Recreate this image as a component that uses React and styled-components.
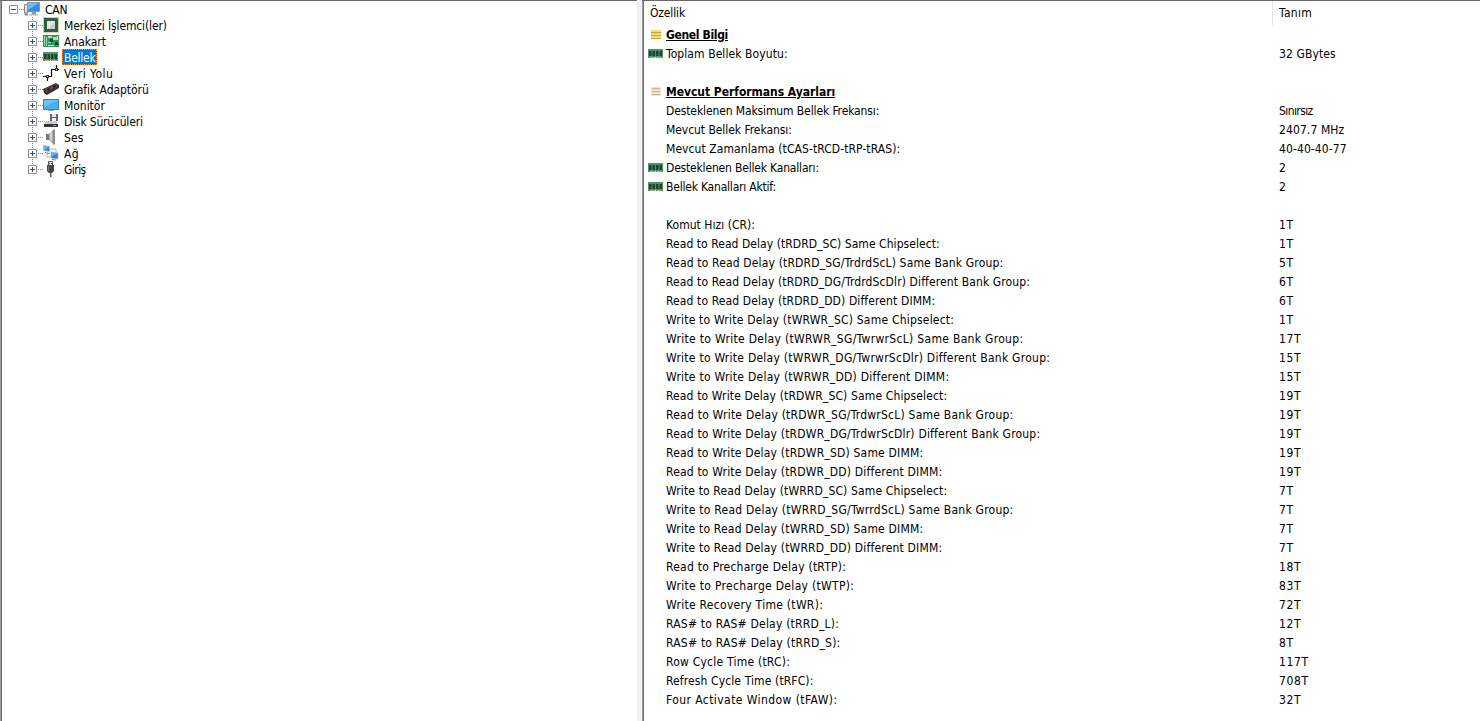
import styled, { createGlobalStyle } from "styled-components";

// stretch: extra pixels spread over the letters of a label
const devices = [
    { name: 'Merkezi İşlemci(ler)', icon: 'cpu', stretch: 2.5 },
    { name: 'Anakart', icon: 'board', stretch: 1.5 },
    { name: 'Bellek', icon: 'ram', stretch: 0, selected: true },
    { name: 'Veri Yolu', icon: 'bus', stretch: 6 },
    { name: 'Grafik Adaptörü', icon: 'gpu', stretch: 3 },
    { name: 'Monitör', icon: 'monitor', stretch: 1.5 },
    { name: 'Disk Sürücüleri', icon: 'disk', stretch: 1 },
    { name: 'Ses', icon: 'sound', stretch: 1 },
    { name: 'Ağ', icon: 'network', stretch: 1 },
    { name: 'Giriş', icon: 'input', stretch: -1.5 },
]

const rows = [
    { name: 'Genel Bilgi', icon: 'gold', heading: true, stretch: -1 },
    { name: 'Toplam Bellek Boyutu:', value: '32 GBytes', icon: 'ram', stretch: 7 },
    {},
    { name: 'Mevcut Performans Ayarları', icon: 'silver', heading: true, stretch: 5.5 },
    { name: 'Desteklenen Maksimum Bellek Frekansı:', value: 'Sınırsız', stretch: 5 },
    { name: 'Mevcut Bellek Frekansı:', value: '2407.7 MHz', stretch: 4.5 },
    { name: 'Mevcut Zamanlama (tCAS-tRCD-tRP-tRAS):', value: '40-40-40-77', stretch: 12.5 },
    { name: 'Desteklenen Bellek Kanalları:', value: '2', icon: 'ram', stretch: 2 },
    { name: 'Bellek Kanalları Aktif:', value: '2', icon: 'ram', stretch: 1 },
    {},
    { name: 'Komut Hızı (CR):', value: '1T', stretch: 4.5 },
    { name: 'Read to Read Delay (tRDRD_SC) Same Chipselect:', value: '1T', stretch: 14 },
    { name: 'Read to Read Delay (tRDRD_SG/TrdrdScL) Same Bank Group:', value: '5T', stretch: 22.5 },
    { name: 'Read to Read Delay (tRDRD_DG/TrdrdScDlr) Different Bank Group:', value: '6T', stretch: 23 },
    { name: 'Read to Read Delay (tRDRD_DD) Different DIMM:', value: '6T', stretch: 16.5 },
    { name: 'Write to Write Delay (tWRWR_SC) Same Chipselect:', value: '1T', stretch: 22 },
    { name: 'Write to Write Delay (tWRWR_SG/TwrwrScL) Same Bank Group:', value: '17T', stretch: 32 },
    { name: 'Write to Write Delay (tWRWR_DG/TwrwrScDlr) Different Bank Group:', value: '15T', stretch: 32.5 },
    { name: 'Write to Write Delay (tWRWR_DD) Different DIMM:', value: '15T', stretch: 24 },
    { name: 'Read to Write Delay (tRDWR_SC) Same Chipselect:', value: '19T', stretch: 18 },
    { name: 'Read to Write Delay (tRDWR_SG/TrdwrScL) Same Bank Group:', value: '19T', stretch: 27 },
    { name: 'Read to Write Delay (tRDWR_DG/TrdwrScDlr) Different Bank Group:', value: '19T', stretch: 27.5 },
    { name: 'Read to Write Delay (tRDWR_SD) Same DIMM:', value: '19T', stretch: 18 },
    { name: 'Read to Write Delay (tRDWR_DD) Different DIMM:', value: '19T', stretch: 20 },
    { name: 'Write to Read Delay (tWRRD_SC) Same Chipselect:', value: '7T', stretch: 18 },
    { name: 'Write to Read Delay (tWRRD_SG/TwrrdScL) Same Bank Group:', value: '7T', stretch: 27.5 },
    { name: 'Write to Read Delay (tWRRD_SD) Same DIMM:', value: '7T', stretch: 18 },
    { name: 'Write to Read Delay (tWRRD_DD) Different DIMM:', value: '7T', stretch: 20 },
    { name: 'Read to Precharge Delay (tRTP):', value: '18T', stretch: 15 },
    { name: 'Write to Precharge Delay (tWTP):', value: '83T', stretch: 18 },
    { name: 'Write Recovery Time (tWR):', value: '72T', stretch: 14 },
    { name: 'RAS# to RAS# Delay (tRRD_L):', value: '12T', stretch: 13 },
    { name: 'RAS# to RAS# Delay (tRRD_S):', value: '8T', stretch: 13.5 },
    { name: 'Row Cycle Time (tRC):', value: '117T', stretch: 10 },
    { name: 'Refresh Cycle Time (tRFC):', value: '708T', stretch: 9.5 },
    { name: 'Four Activate Window (tFAW):', value: '32T', stretch: 19 },
]

const spacing = (text = '', stretch = 0) => (
    `${(-0.25 + stretch / Math.max(text.length, 1)).toFixed(3)}px`
)

const valueSpacing = (text = '') => {
    if (text.endsWith('T')) return '0.6px'
    if (text === 'Sınırsız') return '-0.6px'
    return '0.1px'
}

const drawings = {
    computer: (
        <>
            <path d="M.5 3.500h3v8.500h-3z" fill="#e2e2e2" stroke="#858585" />
            <path d="M3.500 1.500h12v9h-12z" fill="#2f8fdc" stroke="#8b979f" />
            <path d="M4 2h11L4 9z" fill="#6fbdf3" />
            <path d="M8 11h4v2H8z" fill="#8f9599" />
            <path d="M5 13h9v1.500H5z" fill="#b5babd" />
            <path d="M0 12.500h4v2H1z" fill="#8a8a8a" />
        </>
    ),
    cpu: (
        <>
            <path d="M.5 .5h15v15H.5z" fill="#fff" stroke="#b3a052" strokeDasharray="1 1" />
            <path d="M1 1h14v14H1z" fill="#2f5f45" />
            <path d="M4 4h8v8H4z" fill="#e2e5e3" />
            <path d="M5 12h7V5z" fill="#c9cecb" />
        </>
    ),
    board: (
        <>
            <path d="M0 2h16v12H0z" fill="#2f9457" />
            <path d="M1.500 3v10M3.500 4v9" stroke="#a5d8b5" />
            <path d="M5 3h4v2H5zM10 4h4v3h-4zM5 9h3v1H5z" fill="#b6d6bd" />
            <path d="M7 6h3v3H7zM12 9h3v3h-3z" fill="#173f2a" />
            <path d="M5 12h6v1H5zM14 3h1v4h-1z" fill="#e5e1bd" />
        </>
    ),
    ram: (
        <>
            <path d="M0 3h15v9H0z" fill="#43976a" />
            <path d="M1 5h2.500v5H1zM4.500 5H7v5H4.500zM8 5h2.500v5H8zM11.500 5H14v5h-2.500z" fill="#283f38" />
            <path d="M2 11.500h4M9 11.500h4" stroke="#d1a263" />
            <path d="M7 11h1v1H7z" fill="#fff" />
        </>
    ),
    bus: (
        <>
            <path d="M0 11.500h8.500v-7H16M4.500 11v5M13.500 5V0" fill="none" stroke="#111" strokeWidth="1.200" />
            <path d="M3 10h3v3H3zM12 3h3v3h-3z" fill="#3a3510" />
            <path d="M4 11h1v1H4zM13 4h1v1h-1z" fill="#ffe329" />
        </>
    ),
    gpu: (
        <>
            <path d="M0 8L13 2l3 2v3L4 14l-3-2z" fill="#332f31" />
            <path d="M1 8l12-5 2 1.500L4 11z" fill="#504a4d" />
            <path d="M4 8l2-1 1 2-2 1zM10 5l2-1 1 2-2 1z" fill="#191719" />
            <path d="M3 11l3-1M8 9l2-3M12 7l2-1" stroke="#a62732" />
        </>
    ),
    monitor: (
        <>
            <path d="M.5 2.500h15v10H.5z" fill="#43b1f2" stroke="#2787bd" />
            <path d="M1 3h14L1 10z" fill="#6bc5fa" />
            <path d="M5 13h6v1H5z" fill="#8eaab7" />
        </>
    ),
    disk: (
        <>
            <path d="M7 1h8v7H7z" fill="#64686d" />
            <path d="M9 1h4v3H9z" fill="#dce5ef" />
            <path d="M9 5h4v3H9z" fill="#f2f2f2" />
            <path d="M3 8h11l1 3H1z" fill="#c9cccd" />
            <path d="M1 11h14v3H1z" fill="#35393a" />
            <path d="M10 12h3v1h-3z" fill="#31df54" />
        </>
    ),
    sound: (
        <>
            <path d="M3 5h3v6H3z" fill="#72787c" />
            <path d="M6 5l4-4v14l-4-4z" fill="#a7adb1" />
            <path d="M10 .5h2v15h-2z" fill="#858b8f" />
            <path d="M7 5l2-2v9L7 10z" fill="#d0d4d6" />
        </>
    ),
    network: (
        <>
            <path d="M7 4h6v4M4 8v4h5" fill="none" stroke="#b5b5b5" />
            <path d="M.5 .5l6 1v5l-6-1zM8 7l7 1v6l-7-1z" fill="#2684d8" stroke="#a7bfd1" strokeWidth=".8" />
            <path d="M1 1l5 1-5 3zM8.500 7.500l6 1-6 3z" fill="#66b5ee" />
            <path d="M2 7.500l5 1M9 14.500l4 .5" stroke="#888" />
        </>
    ),
    input: (
        <>
            <path d="M5.500 .5h4v4h-4z" fill="#ddd" stroke="#555" />
            <path d="M6 2h1v1H6zM8 2h1v1H8z" fill="#555" />
            <path d="M4 4h7v6l-2 2H6l-2-2z" fill="#424549" />
            <path d="M5.500 5v5" stroke="#777" />
            <path d="M7 12h1.500v4H7z" fill="#55585b" />
        </>
    ),
    gold: (
        <>
            <path d="M3 3h10v9H3z" fill="#f5dc76" />
            <path d="M3 5.500h10M3 8.500h10M3 11.500h10" stroke="#cda332" />
        </>
    ),
    silver: (
        <>
            <path d="M3 3h10v9H3z" fill="#e2e2e2" />
            <path d="M4 4.500h8M4 7.500h8M4 10.500h8" stroke="#cdbb72" />
        </>
    ),
}

const Icon = ({ name }) => (
    <Glyph viewBox="0 0 16 16">{drawings[name]}</Glyph>
)

const App = () => {
    return (
        <Window>
            <GlobalStyle />
            <TreePane>
                <RootRow>
                    <Toggle>
                        <path d="M.5.5h8v8h-8z" fill="#fff" stroke="#919191" />
                        <path d="M2 4.500h5" stroke="#2b4b8c" />
                    </Toggle>
                    <Dots />
                    <Icon name="computer" />
                    <TreeLabel>CAN</TreeLabel>
                </RootRow>
                {devices.map((device, index) => (
                    <TreeRow key={device.name}>
                        <Branch $last={index === devices.length - 1} />
                        <Toggle>
                            <path d="M.5.5h8v8h-8z" fill="#fff" stroke="#919191" />
                            <path d="M2 4.500h5M4.500 2v5" stroke="#2b4b8c" />
                        </Toggle>
                        <Dots />
                        <Icon name={device.icon} />
                        <TreeLabel
                            $selected={device.selected}
                            $spacing={spacing(device.name, device.stretch)}
                        >
                            {device.name}
                        </TreeLabel>
                    </TreeRow>
                ))}
            </TreePane>
            <Splitter />
            <ListPane>
                <Header>
                    <HeaderCell $spacing="-0.15px">Özellik</HeaderCell>
                    <HeaderCell $spacing="0.3px">Tanım</HeaderCell>
                </Header>
                {rows.map((row, index) => (
                    <Row key={index}>
                        <IconCell>{row.icon && <Icon name={row.icon} />}</IconCell>
                        <Name $heading={row.heading} $spacing={spacing(row.name, row.stretch)}>
                            {row.name}
                        </Name>
                        <Value $spacing={valueSpacing(row.value)}>{row.value}</Value>
                    </Row>
                ))}
            </ListPane>
        </Window>
    )
}

export default App

const GlobalStyle = createGlobalStyle`
    * {
        box-sizing: border-box;
    }
    body {
        margin: 0;
        background: #fff;
        overflow: hidden;
    }
`

const Window = styled.main`
    display: grid;
    grid-template-columns: 637px 5px 1fr;
    height: 721px;
    color: #000;
    font-family: 'DejaVu Sans Condensed', 'DejaVu Sans', sans-serif;
    font-stretch: condensed;
    font-size: 12px;
    line-height: 16px;
    letter-spacing: -0.25px;
    white-space: pre;
    font-variant-ligatures: none;
`

const Pane = styled.section`
    border-top: 1px solid #696969;
    box-shadow: inset 1px 0 #a0a0a0, inset 2px 0 #696969;
    padding-left: 2px;
    overflow: hidden;
`

const TreePane = styled(Pane)``

const ListPane = styled(Pane)``

const Splitter = styled.div`
    background: #f0f0f0;
`

const Glyph = styled.svg`
    width: 16px;
    height: 16px;
    flex: none;
`

const Toggle = styled.svg`
    position: relative;
    width: 9px;
    height: 9px;
    flex: none;
`

const RootRow = styled.div`
    display: flex;
    align-items: center;
    height: 16px;
    padding-left: 7px;
`

const TreeRow = styled.div`
    position: relative;
    display: flex;
    align-items: center;
    height: 16px;
    padding-left: 26px;
`

const Branch = styled.i`
    position: absolute;
    left: 30px;
    top: 0;
    width: 1px;
    height: ${({ $last }) => ($last ? '4px' : '16px')};
    background: repeating-linear-gradient(#808080 0 1px, #fff 1px 2px);
`

const Dots = styled.i`
    width: 6px;
    height: 1px;
    background: repeating-linear-gradient(90deg, #fff 0 1px, #808080 1px 2px);
`

const TreeLabel = styled.span`
    height: 16px;
    line-height: 18px;
    margin-left: 3px;
    padding: 0 2px;
    letter-spacing: ${({ $spacing }) => $spacing};
    color: ${({ $selected }) => ($selected ? '#fff' : '#000')};
    background: ${({ $selected }) => ($selected ? '#0078d7' : 'transparent')};
    outline: ${({ $selected }) => ($selected ? '1px dotted #ff8728' : 'none')};
    outline-offset: -1px;
`

const Header = styled.header`
    display: grid;
    grid-template-columns: 629px 1fr;
    height: 24px;
    line-height: 25px;
`

const HeaderCell = styled.div`
    height: 24px;
    padding-left: 6px;
    letter-spacing: ${({ $spacing }) => $spacing};
    border-right: 1px solid #e5e5e5;
    &:last-child {
        border: 0;
    }
`

const Row = styled.div`
    display: grid;
    grid-template-columns: 22px 613px 1fr;
    height: 19px;
    line-height: 21px;
`

const IconCell = styled.div`
    display: flex;
    align-items: flex-start;
    padding: 2px 0 0 4px;
`

const Name = styled.span`
    letter-spacing: ${({ $spacing }) => $spacing};
    font-weight: ${({ $heading }) => ($heading ? 700 : 400)};
    text-decoration: ${({ $heading }) => ($heading ? 'underline' : 'none')};
`

const Value = styled.span`
    letter-spacing: ${({ $spacing }) => $spacing};
`
